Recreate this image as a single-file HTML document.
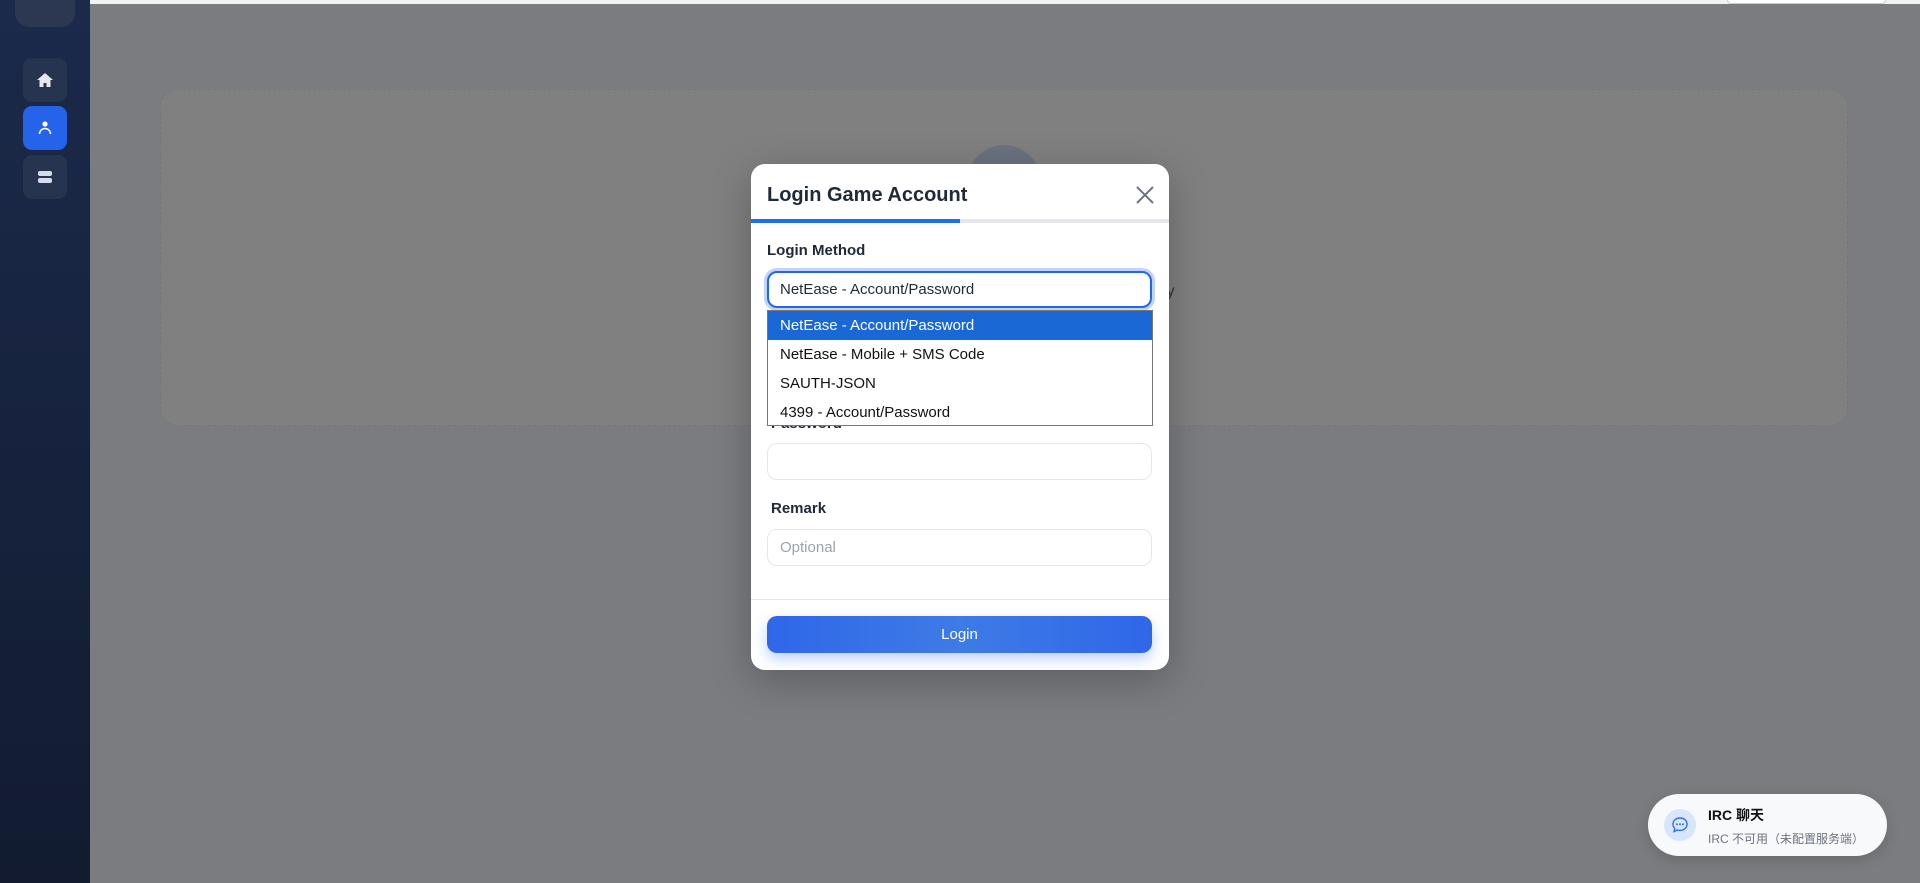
<!DOCTYPE html>
<html><head><meta charset="utf-8"><style>
*{box-sizing:border-box;margin:0;padding:0}
body{width:1920px;height:883px;overflow:hidden;background:#7b7c80;font-family:"Liberation Sans","Noto Sans CJK SC",sans-serif;position:relative}
.side{position:absolute;left:0;top:0;width:90px;height:883px;background:linear-gradient(#1b2a4b,#121b30)}
.sb{position:absolute;left:23px;width:44px;height:44px;border-radius:9px;background:#27344f;display:flex;align-items:center;justify-content:center}
.topbar{position:absolute;left:90px;top:0;width:1830px;height:4px;background:#f2f2f2}
.card{position:absolute;left:160px;top:89px;width:1688px;height:337px;border:1px dashed #75767a;border-radius:18px;background:#808080}
.modal{position:absolute;left:751px;top:164px;width:418px;height:506px;background:#fff;border-radius:14px;box-shadow:0 10px 40px rgba(0,0,0,.25);overflow:hidden}
.title{position:absolute;left:16px;top:20px;font-size:20px;font-weight:bold;color:#1f2937}
.lbl{position:absolute;font-size:15px;font-weight:bold;color:#1f2937}
.inp{position:absolute;left:16px;width:385px;height:37px;border:1px solid #e5e7eb;border-radius:10px;font-size:15px;color:#9ca3af;padding:9px 12px}
.opt{height:29px;line-height:29px;padding-left:12px;font-size:15px;color:#111}
</style></head><body>
<div class="side">
 <div style="position:absolute;left:15px;top:-30px;width:60px;height:57px;border-radius:14px;background:#2c3852"></div>
 <div class="sb" style="top:58px"><svg width="18" height="16" viewBox="0 0 18 16"><path d="M9 1L1 8h2.5v7h4v-4h3v4h4V8H17z" fill="#e5e7f0"/></svg></div>
 <div class="sb" style="top:106px;background:#2563eb"><svg width="16" height="16" viewBox="0 0 16 16"><circle cx="8" cy="4" r="2.6" fill="#fff"/><path d="M2.5 14a5.5 5.5 0 0 1 11 0" stroke="#fff" stroke-width="1.5" fill="none"/></svg></div>
 <div class="sb" style="top:155px"><svg width="18" height="16" viewBox="0 0 18 16"><rect x="2" y="2" width="14" height="5" rx="2" fill="#d6dbeb"/><rect x="2" y="9" width="14" height="5" rx="2" fill="#d6dbeb"/></svg></div>
</div>
<div class="topbar"></div>
<div style="position:absolute;left:1727px;top:0;width:159px;height:4px;border-radius:0 0 8px 8px;background:#fff;border:1px solid #ccc;border-top:none"></div>
<div class="card"></div>
<div style="position:absolute;left:967px;top:145px;width:74px;height:74px;border-radius:50%;background:#6b7280"></div>
<div style="position:absolute;left:1163px;top:283px;font-size:16px;color:#333">ly</div>
<div class="modal">
 <div class="title">Login Game Account</div>
 <svg style="position:absolute;left:385px;top:22px" width="18" height="18" viewBox="0 0 18 18"><path d="M1 1L17 17M17 1L1 17" stroke="#6b7280" stroke-width="2"/></svg>
 <div style="position:absolute;left:0;top:55px;width:418px;height:4px;background:#e5e7eb"></div>
 <div style="position:absolute;left:0;top:55px;width:209px;height:4px;background:#1f6feb"></div>
 <div class="lbl" style="left:16px;top:78px">Login Method</div>
 <div class="inp" style="top:107px;border:2px solid #2563eb;box-shadow:0 0 0 3px #bfd3fb;color:#1f2937;padding:8px 11px">NetEase - Account/Password</div>
 <div class="lbl" style="left:20px;top:251px">Password</div>
 <div class="inp" style="top:279px"></div>
 <div class="lbl" style="left:20px;top:336px">Remark</div>
 <div class="inp" style="top:365px">Optional</div>
 <div style="position:absolute;left:0;top:435px;width:418px;height:1px;background:#e5e7eb"></div>
 <div style="position:absolute;left:16px;top:452px;width:385px;height:37px;border-radius:10px;background:linear-gradient(90deg,#2f67e8,#3e7be6,#2f67e8);box-shadow:0 6px 14px rgba(37,99,235,.3);color:#fff;font-size:15px;text-align:center;line-height:37px">Login</div>
 <div style="position:absolute;left:16px;top:146px;width:386px;height:116px;background:#fff;border:1px solid #767676">
  <div class="opt" style="background:#1a68d6;color:#fff">NetEase - Account/Password</div>
  <div class="opt">NetEase - Mobile + SMS Code</div>
  <div class="opt">SAUTH-JSON</div>
  <div class="opt">4399 - Account/Password</div>
 </div>
</div>
<div style="position:absolute;left:1648px;top:794px;width:239px;height:62px;border-radius:31px;background:#f8f9fb;box-shadow:0 4px 14px rgba(0,0,0,.15)">
 <div style="position:absolute;left:16px;top:15px;width:32px;height:32px;border-radius:50%;background:#d7e6fd;display:flex;align-items:center;justify-content:center"><svg width="18" height="18" viewBox="0 0 18 18"><path d="M9 2c4 0 7 2.7 7 6.2s-3 6.2-7 6.2c-.9 0-1.7-.1-2.5-.4L3 15.5l.9-3C2.7 11.4 2 9.9 2 8.2 2 4.7 5 2 9 2z" fill="none" stroke="#2f6fe8" stroke-width="1.4"/><circle cx="6" cy="8.3" r="1" fill="#2f6fe8"/><circle cx="9" cy="8.3" r="1" fill="#2f6fe8"/><circle cx="12" cy="8.3" r="1" fill="#2f6fe8"/></svg></div>
 <div style="position:absolute;left:60px;top:11px;font-size:14px;font-weight:bold;color:#111">IRC 聊天</div>
 <div style="position:absolute;left:60px;top:36px;font-size:12px;color:#6b7280">IRC 不可用（未配置服务端）</div>
</div>
</body></html>
